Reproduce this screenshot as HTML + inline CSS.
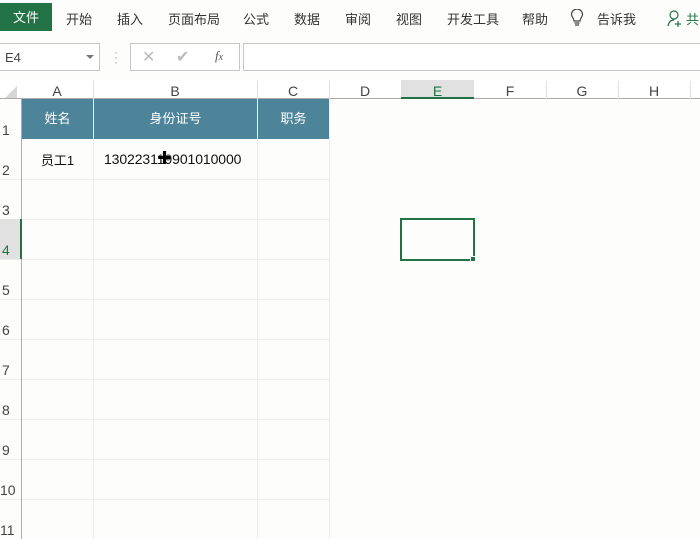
<!DOCTYPE html><html><head><meta charset="utf-8"><style>
*{margin:0;padding:0;box-sizing:border-box}
body{width:700px;height:539px;overflow:hidden;background:#fdfdfc;font-family:"Liberation Sans","Noto Sans CJK SC",sans-serif;position:relative;color:#333}
.a{position:absolute}
.tab{position:absolute;top:9px;font-size:13px;color:#333}
.hl{position:absolute;left:0;width:329px;height:1px;background:#ececec}
.vl{position:absolute;top:99px;bottom:0;width:1px;background:#ececec}
.ch{position:absolute;top:83px;font-size:14px;color:#444;text-align:center}
.rn{position:absolute;left:2px;font-size:14px;color:#444}
.hd{position:absolute;top:99px;height:40px;background:#4e8499;color:#fff;font-size:13px;text-align:center;line-height:40px}
</style></head><body>
<div class="a" style="left:0;top:3px;width:52px;height:28px;background:#217346;color:#fff;font-size:13px;line-height:30px;text-align:center">文件</div>
<div class="tab" style="left:66px">开始</div>
<div class="tab" style="left:117px">插入</div>
<div class="tab" style="left:168px">页面布局</div>
<div class="tab" style="left:243px">公式</div>
<div class="tab" style="left:294px">数据</div>
<div class="tab" style="left:345px">审阅</div>
<div class="tab" style="left:396px">视图</div>
<div class="tab" style="left:447px">开发工具</div>
<div class="tab" style="left:522px">帮助</div>
<svg class="a" style="left:570px;top:9px" width="14" height="18" viewBox="0 0 14 18"><path d="M4 12 C4 9 1.5 8 1.5 5.5 A5.5 5.5 0 0 1 12.5 5.5 C12.5 8 10 9 10 12 Z M4.5 14h5M5 16h4" fill="none" stroke="#444" stroke-width="1.2"/></svg>
<div class="tab" style="left:597px">告诉我</div>
<svg class="a" style="left:667px;top:9px" width="18" height="18" viewBox="0 0 18 18"><circle cx="7" cy="6" r="4" fill="none" stroke="#217346" stroke-width="1.2"/><path d="M1 17 C2 12 5 11 7 11 M11 12v6M8 15h6" fill="none" stroke="#217346" stroke-width="1.2"/></svg>
<div class="tab" style="left:686px;color:#217346">共</div>
<div class="a" style="left:0;top:43px;width:100px;height:28px;border:1px solid #c6c6c6;border-left:none;background:#fff;font-size:13px;line-height:28px;padding-left:5px;color:#444">E4</div>
<div class="a" style="left:86px;top:55px;width:0;height:0;border-left:4px solid transparent;border-right:4px solid transparent;border-top:4px solid #777"></div>
<div class="a" style="left:114px;top:50px;font-size:12px;color:#aaa;line-height:5px">·<br>·<br>·</div>
<div class="a" style="left:130px;top:43px;width:110px;height:28px;border:1px solid #c6c6c6;background:#fff"></div>
<div class="a" style="left:142px;top:47px;font-size:16px;color:#bbb">✕</div>
<div class="a" style="left:176px;top:47px;font-size:16px;color:#bbb">✔</div>
<div class="a" style="left:215px;top:48px;font-size:13px;color:#555;font-style:italic;font-family:'Liberation Serif',serif">f<span style="font-size:10px">x</span></div>
<div class="a" style="left:243px;top:43px;width:460px;height:28px;border:1px solid #c6c6c6;background:#fff"></div>
<div class="a" style="left:0;top:80px;width:700px;height:19px;background:#fff;border-bottom:1px solid #ababab"></div>
<div class="a" style="left:5px;top:86px;width:0;height:0;border-left:12px solid transparent;border-bottom:12px solid #d6d6d6"></div>
<div class="a" style="left:401px;top:80px;width:73px;height:19px;background:#e1e1e1;border-bottom:2px solid #217346"></div>
<div class="ch" style="left:21px;width:72px">A</div>
<div class="ch" style="left:93px;width:164px">B</div>
<div class="ch" style="left:257px;width:72px">C</div>
<div class="ch" style="left:329px;width:72px">D</div>
<div class="ch" style="left:401px;width:73px;color:#217346">E</div>
<div class="ch" style="left:474px;width:72px">F</div>
<div class="ch" style="left:546px;width:72px">G</div>
<div class="ch" style="left:618px;width:72px">H</div>
<div class="a" style="left:93px;top:81px;width:1px;height:18px;background:#e0e0e0"></div>
<div class="a" style="left:257px;top:81px;width:1px;height:18px;background:#e0e0e0"></div>
<div class="a" style="left:329px;top:81px;width:1px;height:18px;background:#e0e0e0"></div>
<div class="a" style="left:546px;top:81px;width:1px;height:18px;background:#e0e0e0"></div>
<div class="a" style="left:618px;top:81px;width:1px;height:18px;background:#e0e0e0"></div>
<div class="a" style="left:690px;top:81px;width:1px;height:18px;background:#e0e0e0"></div>
<div class="vl" style="left:93px"></div><div class="vl" style="left:257px"></div><div class="vl" style="left:329px"></div>
<div class="hl" style="top:179px"></div><div class="hl" style="top:219px"></div><div class="hl" style="top:259px"></div><div class="hl" style="top:299px"></div><div class="hl" style="top:339px"></div><div class="hl" style="top:379px"></div><div class="hl" style="top:419px"></div><div class="hl" style="top:459px"></div><div class="hl" style="top:499px"></div>
<div class="a" style="left:0;top:219px;width:21px;height:40px;background:#e1e1e1"></div>
<div class="a" style="left:21px;top:99px;width:1px;height:440px;background:#ababab"></div>
<div class="a" style="left:20px;top:219px;width:2px;height:40px;background:#217346"></div>
<div class="rn" style="top:122px">1</div><div class="rn" style="top:162px">2</div><div class="rn" style="top:202px">3</div><div class="rn" style="top:242px;color:#217346">4</div><div class="rn" style="top:282px">5</div><div class="rn" style="top:322px">6</div><div class="rn" style="top:362px">7</div><div class="rn" style="top:402px">8</div><div class="rn" style="top:442px">9</div><div class="rn" style="top:482px;left:0">10</div><div class="rn" style="top:522px;left:0">11</div>
<div class="hd" style="left:22px;width:71px">姓名</div>
<div class="hd" style="left:94px;width:163px">身份证号</div>
<div class="hd" style="left:258px;width:71px">职务</div>
<div class="a" style="left:22px;top:150px;width:71px;text-align:center;font-size:13px;color:#111">员工1</div>
<div class="a" style="left:104px;top:151px;font-size:14px;color:#111;letter-spacing:-0.1px">130223119901010000</div>
<div class="a" style="left:157px;top:152px;font-size:15px;line-height:14px;color:#000;text-shadow:0 0 1px #fff">✚</div>
<div class="a" style="left:400px;top:218px;width:75px;height:43px;border:2px solid #217346"></div>
<div class="a" style="left:470px;top:256px;width:6px;height:6px;background:#217346;border:1px solid #fff"></div>
</body></html>
